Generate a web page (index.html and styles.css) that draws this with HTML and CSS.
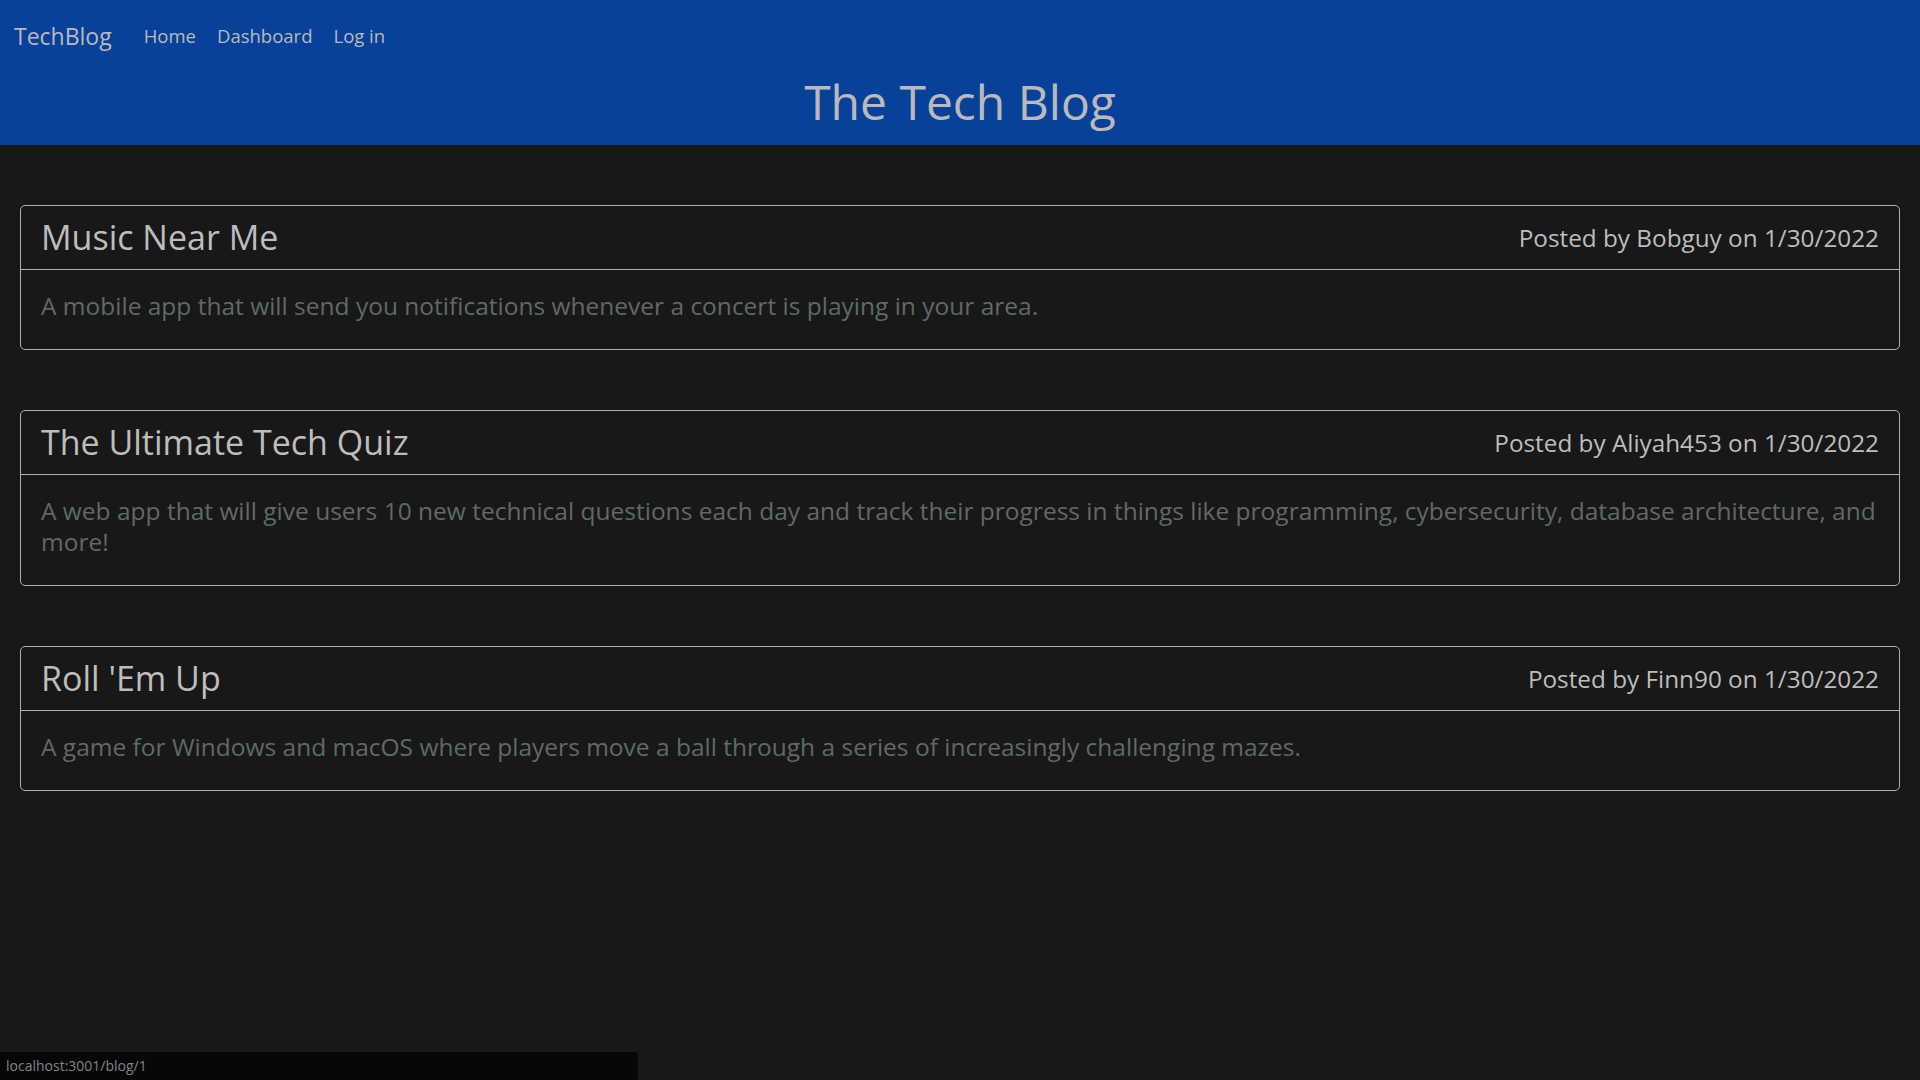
FILE: index.html
```html
<!DOCTYPE html>
<html lang="en">
<head>
<meta charset="utf-8">
<title>The Tech Blog</title>
<link rel="stylesheet" href="styles.css">
</head>
<body>
<header class="site-header">
  <nav class="navbar">
    <a class="brand" href="#">TechBlog</a>
    <ul class="nav-links">
      <li><a class="nav-link" href="#">Home</a></li>
      <li><a class="nav-link" href="#">Dashboard</a></li>
      <li><a class="nav-link" href="#">Log in</a></li>
    </ul>
  </nav>
  <h1 class="site-title">The Tech Blog</h1>
</header>
<main class="posts">
  <article class="card">
    <div class="card-header">
      <h2 class="card-title">Music Near Me</h2>
      <p class="card-meta">Posted by Bobguy on 1/30/2022</p>
    </div>
    <div class="card-body">
      <p class="card-text">A mobile app that will send you notifications whenever a concert is playing in your area.</p>
    </div>
  </article>
  <article class="card">
    <div class="card-header">
      <h2 class="card-title">The Ultimate Tech Quiz</h2>
      <p class="card-meta">Posted by Aliyah453 on 1/30/2022</p>
    </div>
    <div class="card-body">
      <p class="card-text">A web app that will give users 10 new technical questions each day and track their progress in things like programming, cybersecurity, database architecture, and more!</p>
    </div>
  </article>
  <article class="card">
    <div class="card-header">
      <h2 class="card-title">Roll 'Em Up</h2>
      <p class="card-meta">Posted by Finn90 on 1/30/2022</p>
    </div>
    <div class="card-body">
      <p class="card-text">A game for Windows and macOS where players move a ball through a series of increasingly challenging mazes.</p>
    </div>
  </article>
</main>
<div class="status-bubble">localhost:3001/blog/1</div>
</body>
</html>
```
FILE: styles.css
```css
* { box-sizing: border-box; }

html, body {
  margin: 0;
  padding: 0;
  background: #181818;
  min-height: 100%;
}

body {
  font-family: "Open Sans", "Noto Sans", sans-serif;
  color: #b9b9b9;
  min-height: 1080px;
}

a { text-decoration: none; color: inherit; }

.site-header {
  background: #08419a;
  height: 145px;
  padding-top: 21px;
}

.navbar {
  display: flex;
  align-items: flex-start;
  padding-left: 14px;
  height: 30px;
}

.brand {
  font-size: 23px;
  line-height: 30px;
  color: #bababa;
  margin-right: 32px;
}

.nav-links {
  list-style: none;
  display: flex;
  gap: 21px;
  margin: 0;
  padding: 0;
}

.nav-link {
  font-size: 18.5px;
  line-height: 29px;
  color: #bababa;
}

.site-title {
  margin: 22px 0 0;
  text-align: center;
  font-size: 48px;
  font-weight: 500;
  line-height: 58px;
  color: #bababa;
}

.posts {
  padding: 0 20px;
}

.card {
  margin-top: 60px;
  border: 1px solid #a9b3b0;
  border-radius: 5px;
}

.card-header {
  display: flex;
  justify-content: space-between;
  align-items: center;
  padding: 11px 20px;
  border-bottom: 1px solid #a9b3b0;
}

.card-title {
  margin: 0;
  font-size: 34px;
  font-weight: 500;
  line-height: 41px;
  color: #bdbdbd;
}

.card-meta {
  margin: 0;
  font-size: 24.3px;
  line-height: 36px;
  color: #bdbdbd;
}

.card-body {
  padding: 20px 20px 28px;
}

.card-text {
  margin: 0;
  font-size: 24.5px;
  line-height: 31px;
  color: #5c6b67;
}

.status-bubble {
  position: fixed;
  left: 0;
  bottom: 0;
  width: 638px;
  height: 28px;
  padding: 3px 6px 0;
  background: #070707;
  border-top-right-radius: 4px;
  font-size: 14px;
  line-height: 22px;
  color: #7e868a;
}
```
